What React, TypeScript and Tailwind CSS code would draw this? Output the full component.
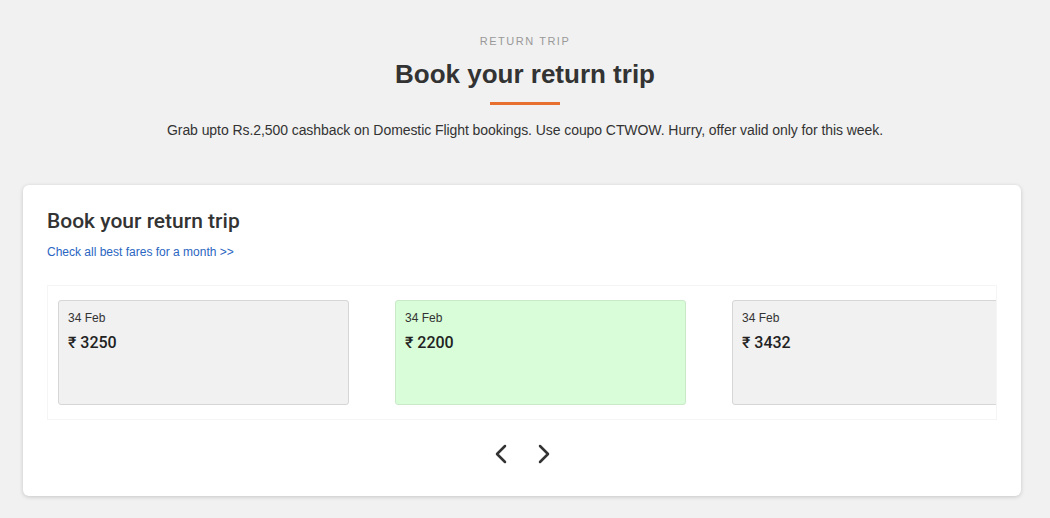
import React, { useState } from 'react';

const fares = [
  { id: 1, date: '34 Feb', price: '3250' },
  { id: 2, date: '34 Feb', price: '2200', best: true },
  { id: 3, date: '34 Feb', price: '3432' },
];

const App: React.FC = () => {
  const [selected, setSelected] = useState(2);

  return (
    <div className="min-h-screen bg-[#f1f1f1] text-[#333] font-['Liberation_Sans',Arial,sans-serif]">
      {/* Section header */}
      <header className="pt-[33px] flex flex-col items-center">
        <p className="text-[11px] leading-4 tracking-[0.14em] uppercase text-[#999]">Return trip</p>
        <h1 className="mt-[9px] text-[26px] leading-8 font-bold text-[#333]">Book your return trip</h1>
        <div className="mt-[12px] w-[70px] h-[3px] bg-[#e8702f]"></div>
        <p className="mt-[15px] text-[14px] leading-5 tracking-[-0.005em] text-[#333]">
          Grab upto Rs.2,500 cashback on Domestic Flight bookings. Use coupo CTWOW. Hurry, offer valid only for this week.
        </p>
      </header>

      {/* Fares card */}
      <section className="mt-[45px] mx-[23px] w-[998px] bg-white rounded-md shadow-[0_1px_4px_rgba(0,0,0,0.18)] px-[24px] pt-[24px] pb-[30px]">
        <h2 className="text-[21px] leading-6 font-medium font-['Roboto',Arial,sans-serif] text-[#333]">Book your return trip</h2>
        <a href="#" className="block mt-[11px] text-[12px] leading-4 text-[#2a66c2]">Check all best fares for a month &gt;&gt;</a>

        {/* Carousel */}
        <div className="mt-[25px] w-[950px] h-[135px] bg-white border border-[#f5f5f5] overflow-hidden">
          <div className="flex gap-[46px] pl-[10px] pt-[14px]">
            {fares.map((f) => (
              <div
                key={f.id}
                onClick={() => setSelected(f.id)}
                className={`shrink-0 w-[291px] h-[105px] rounded-[3px] border px-[9px] pt-[9px] cursor-pointer ${
                  f.id === selected ? 'bg-[#d8fdd8] border-[#c9e9c9]' : 'bg-[#f1f1f1] border-[#d6d6d6]'
                }`}
              >
                <p className="text-[12px] leading-4 text-[#333]">{f.date}</p>
                <p className="mt-[7px] text-[16px] leading-5 font-medium font-['Roboto',Arial,sans-serif] text-[#222]">₹ {f.price}</p>
              </div>
            ))}
          </div>
        </div>

        {/* Arrows */}
        <div className="mt-[22px] flex justify-center gap-[19px]">
          <button className="w-6 h-6 flex items-center justify-center">
            <svg width="16" height="22" viewBox="0 0 16 22" fill="none" stroke="#333" strokeWidth="2.5" strokeLinecap="round" strokeLinejoin="round">
              <polyline points="12,3 4,11 12,19" />
            </svg>
          </button>
          <button className="w-6 h-6 flex items-center justify-center">
            <svg width="16" height="22" viewBox="0 0 16 22" fill="none" stroke="#333" strokeWidth="2.5" strokeLinecap="round" strokeLinejoin="round">
              <polyline points="4,3 12,11 4,19" />
            </svg>
          </button>
        </div>
      </section>
    </div>
  );
};

export default App;
